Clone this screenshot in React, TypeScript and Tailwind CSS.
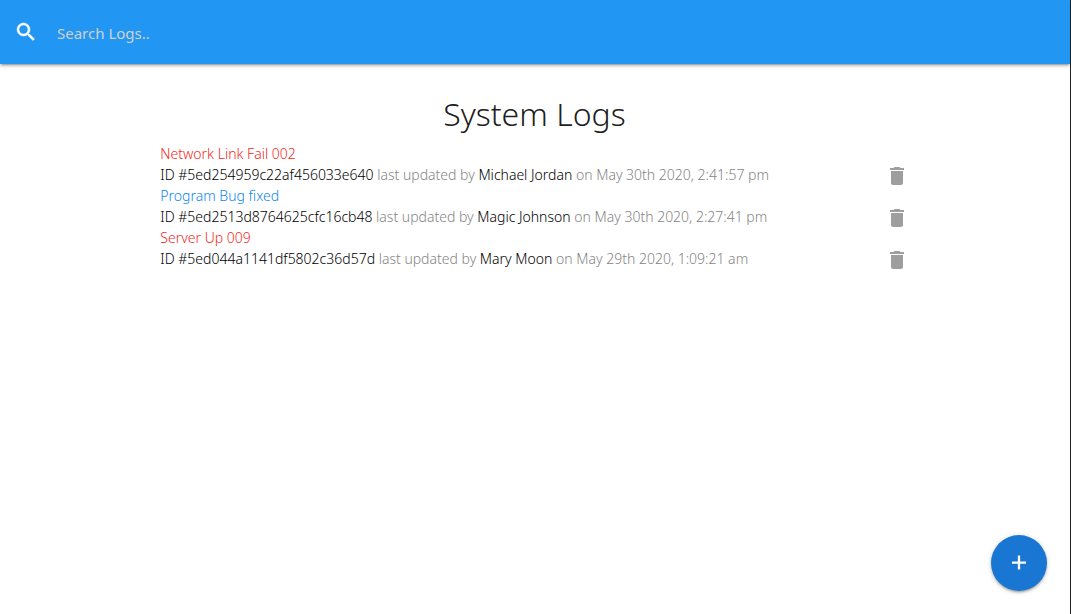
import React, { useState } from "react";
import { MdDelete } from "react-icons/md";

type Log = {
  id: string;
  message: string;
  attention: boolean;
  tech: string;
  date: string;
};

const initialLogs: Log[] = [
  { id: "5ed254959c22af456033e640", message: "Network Link Fail 002", attention: true, tech: "Michael Jordan", date: "May 30th 2020, 2:41:57 pm" },
  { id: "5ed2513d8764625cfc16cb48", message: "Program Bug fixed", attention: false, tech: "Magic Johnson", date: "May 30th 2020, 2:27:41 pm" },
  { id: "5ed044a1141df5802c36d57d", message: "Server Up 009", attention: true, tech: "Mary Moon", date: "May 29th 2020, 1:09:21 am" },
];

function SearchBar() {
  return (
    <nav className="h-16 bg-[#2196f3] shadow-[0_2px_2px_0_rgba(0,0,0,0.14),0_3px_1px_-2px_rgba(0,0,0,0.12),0_1px_5px_0_rgba(0,0,0,0.2)]">
      <form className="flex h-full items-center gap-[19px] px-3.5" onSubmit={(e) => e.preventDefault()}>
        <label htmlFor="search" aria-label="Search logs">
          <svg viewBox="0 0 24 24" className="size-6 text-white" fill="currentColor" stroke="currentColor" strokeWidth="0.5" aria-hidden="true">
            <path d="M15.5 14h-.79l-.28-.27A6.471 6.471 0 0 0 16 9.500A6.500 6.500 0 1 0 9.500 16c1.610 0 3.090-.59 4.230-1.570l.27.28v.79l5 4.990L20.490 19l-4.990-5zm-6 0C7.010 14 5 11.990 5 9.500S7.010 5 9.500 5 14 7.010 14 9.500 11.990 14 9.500 14z" />
          </svg>
        </label>
        <input
          id="search"
          type="search"
          placeholder="Search Logs.."
          className="h-full min-w-0 flex-1 bg-transparent pt-px text-[15px] font-normal text-white outline-none placeholder:text-[#d1d1d1]"
        />
      </form>
    </nav>
  );
}

function LogItem({ log, onDelete }: { log: Log; onDelete: () => void }) {
  return (
    <li className="flex items-end justify-between">
      <div>
        <a href="#edit-log" className={log.attention ? "text-[#f22a1d]" : "text-[#0d87ee]"}>
          {log.message}
        </a>
        <p className="text-[#858585]">
          <span className="text-black">ID #{log.id}</span> last updated by{" "}
          <span className="text-black">{log.tech}</span> on {log.date}
        </p>
      </div>
      <button type="button" aria-label="Delete log" onClick={onDelete} className="h-[21px] text-[#9e9e9e]">
        <MdDelete className="size-6" />
      </button>
    </li>
  );
}

export default function App() {
  const [logs, setLogs] = useState(initialLogs);
  return (
    <div className="flex min-h-screen flex-col border-r border-[#222222] bg-white font-['Noto_Sans','Open_Sans',sans-serif] font-light">
      <SearchBar />
      <div className="pr-px">
        <main className="mx-auto w-7/10 pt-7">
          <h1 className="text-center text-[32px] leading-11 text-black/90">System Logs</h1>
          <ul className="pt-[7px] text-sm leading-[21px]">
            {logs.map((log) => (
              <LogItem key={log.id} log={log} onDelete={() => setLogs(logs.filter((l) => l.id !== log.id))} />
            ))}
          </ul>
        </main>
      </div>
      <button
        type="button"
        aria-label="Add log"
        className="fixed right-6 bottom-[23px] flex size-14 items-center justify-center rounded-full bg-[#1976d2] text-white shadow-[0_2px_2px_0_rgba(0,0,0,0.14),0_3px_1px_-2px_rgba(0,0,0,0.12),0_1px_5px_0_rgba(0,0,0,0.2)]"
      >
        <svg viewBox="0 0 24 24" className="size-6" fill="none" stroke="currentColor" strokeWidth="2.3" aria-hidden="true">
          <path d="M12 4.600v14M5 11.600h14" />
        </svg>
      </button>
    </div>
  );
}
